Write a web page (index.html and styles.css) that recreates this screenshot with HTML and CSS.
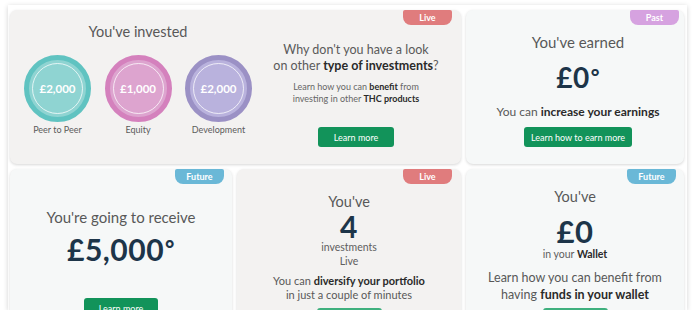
FILE: index.html
```html
<!DOCTYPE html>
<html>
<head>
<meta charset="utf-8">
<link rel="stylesheet" href="styles.css">
</head>
<body>
<div class="board">
  <div class="grid">
    <section class="card card-warm card-wide">
      <span class="badge badge-live">Live</span>
      <div class="invested">
        <h2 class="title">You've invested</h2>
        <div class="coins">
          <div class="coin-item">
            <div class="coin coin-teal"><span>£2,000</span></div>
            <div class="coin-label">Peer to Peer</div>
          </div>
          <div class="coin-item">
            <div class="coin coin-pink"><span>£1,000</span></div>
            <div class="coin-label">Equity</div>
          </div>
          <div class="coin-item">
            <div class="coin coin-purple"><span>£2,000</span></div>
            <div class="coin-label">Development</div>
          </div>
        </div>
      </div>
      <div class="promo">
        <p class="promo-lead">Why don't you have a look<br>on other <b>type of investments</b>?</p>
        <p class="promo-small">Learn how you can <b>benefit</b> from<br>investing in other <b>THC products</b></p>
        <a class="btn btn-promo">Learn more</a>
      </div>
    </section>

    <section class="card card-cool card-earned">
      <span class="badge badge-past">Past</span>
      <h2 class="title title-earned">You've earned</h2>
      <div class="amount amount-earned">£0<span class="mark">°</span></div>
      <p class="note note-earned">You can <b>increase your earnings</b></p>
      <a class="btn btn-earn">Learn how to earn more</a>
    </section>

    <section class="card card-cool card-receive">
      <span class="badge badge-future">Future</span>
      <h2 class="title title-receive">You're going to receive</h2>
      <div class="amount amount-receive">£5,000<span class="mark">°</span></div>
      <a class="btn btn-receive">Learn more</a>
    </section>

    <section class="card card-warm card-count">
      <span class="badge badge-live">Live</span>
      <h2 class="title title-count">You've</h2>
      <div class="amount amount-count">4</div>
      <p class="sub">investments<br>Live</p>
      <p class="note note-count">You can <b>diversify your portfolio</b><br>in just a couple of minutes</p>
      <a class="btn btn-bar" aria-hidden="true"></a>
    </section>

    <section class="card card-cool card-wallet">
      <span class="badge badge-future">Future</span>
      <h2 class="title title-wallet">You've</h2>
      <div class="amount amount-wallet">£0</div>
      <p class="sub sub-wallet">in your <b>Wallet</b></p>
      <p class="note note-wallet">Learn how you can benefit from<br>having <b>funds in your wallet</b></p>
      <a class="btn btn-bar" aria-hidden="true"></a>
    </section>
  </div>
</div>
</body>
</html>
```

FILE: styles.css
```css
* { box-sizing: border-box; }
html, body { margin: 0; padding: 0; background: #ffffff; }
body { font-family: Lato, "Liberation Sans", sans-serif; color: #5a5a5a; }

.board {
  margin: 5px 8px 0 8px;
  height: 305px;
  overflow: hidden;
  background: #ffffff;
  box-shadow: 0 1px 5px rgba(0, 0, 0, 0.18);
  padding: 5px 2px 0 2px;
}

.grid {
  display: grid;
  grid-template-columns: 222px 224px 218px;
  grid-template-rows: 154px 150px;
  column-gap: 5px;
  row-gap: 5px;
}

.card {
  position: relative;
  border-radius: 7px;
  box-shadow: 0 1px 3px rgba(0, 0, 0, 0.16);
  text-align: center;
  display: flex;
  flex-direction: column;
  align-items: center;
}
.card-warm { background: #f3f2f1; }
.card-cool { background: #f6f8f8; }
.card-wide { grid-column: 1 / 3; flex-direction: row; align-items: flex-start; }

.badge {
  position: absolute;
  top: 0;
  right: 9px;
  width: 49px;
  height: 15px;
  border-radius: 2px 2px 8px 8px;
  color: #ffffff;
  font-size: 9px;
  font-weight: 700;
  line-height: 15px;
  text-align: center;
}
.badge-live { background: #e07c7d; }
.badge-past { background: #d6a2e0; right: 5px; }
.badge-future { background: #6ab8d7; right: 8px; }

.title {
  margin: 0;
  font-size: 14.5px;
  font-weight: 400;
  line-height: 18px;
  color: #585858;
}

/* invested */
.invested { width: 256px; padding-top: 13px; display: flex; flex-direction: column; align-items: center; }
.coins { display: flex; gap: 13.5px; margin-top: 14px; }
.coin-item { width: 67px; display: flex; flex-direction: column; align-items: center; }
.coin {
  position: relative;
  width: 67px;
  height: 67px;
  border-radius: 50%;
  border: 5px solid;
  display: flex;
  align-items: center;
  justify-content: center;
  color: #ffffff;
  font-weight: 700;
  font-size: 11.5px;
}
.coin::after {
  content: "";
  position: absolute;
  inset: 3px;
  border-radius: 50%;
  border: 1px solid rgba(255, 255, 255, 0.75);
}
.coin-teal { background: #8fd4d2; border-color: #60c3c1; }
.coin-pink { background: #dda4cf; border-color: #d481bd; }
.coin-purple { background: #b9b2dd; border-color: #9b91c5; }
.coin-label { margin-top: 2px; font-size: 9px; line-height: 12px; color: #5c5c5c; white-space: nowrap; }

/* promo */
.promo { width: 195px; padding: 32px 15px 0 0; display: flex; flex-direction: column; align-items: center; }
.promo-lead { margin: 0; font-size: 12.5px; line-height: 16px; color: #5a5a5a; }
.promo-lead b, .note b, .sub b, .promo-small b { color: #2a2a2a; font-weight: 700; }
.promo-small { margin: 7px 0 0; font-size: 9px; line-height: 12px; color: #666; }

.btn {
  display: flex;
  align-items: center;
  justify-content: center;
  height: 20px;
  border-radius: 3px;
  background: #12935a;
  color: #ffffff;
  font-size: 9px;
  text-decoration: none;
  flex-shrink: 0;
}
.btn-promo { width: 76px; margin-top: 22px; }
.btn-bar { width: 65px; background: #3fb07e; }

/* amounts */
.amount { color: #1d3549; font-weight: 700; letter-spacing: 0.5px; }
.mark { font-size: 0.75em; font-weight: 900; line-height: 0; vertical-align: 0.18em; margin-left: 1px; }

/* earned */
.card-earned { padding: 23px 0 0 6px; }
.title-earned { font-size: 15px; }
.amount-earned { margin-top: 10px; font-size: 28px; line-height: 32px; }
.note { margin: 0; color: #585858; }
.note-earned { margin-top: 11px; font-size: 12px; line-height: 15px; }
.btn-earn { width: 108px; margin-top: 8px; }

/* receive */
.card-receive { padding-top: 39px; }
.title-receive { font-size: 15px; }
.amount-receive { margin-top: 6px; font-size: 30px; line-height: 34px; }
.btn-receive { width: 74px; margin-top: 32px; }

/* count */
.card-count { padding-top: 24px; }
.amount-count { font-size: 30px; line-height: 28px; margin-top: 1px; }
.sub { margin: 0; font-size: 10.5px; line-height: 14px; color: #5e5e5e; }
.note-count { margin-top: 6px; font-size: 11px; line-height: 14px; }
.card-count .btn-bar { margin-top: 6px; }

/* wallet */
.card-wallet { padding-top: 19px; }
.amount-wallet { margin-top: 10px; font-size: 31px; line-height: 30px; }
.sub-wallet { margin-top: 2px; line-height: 13px; }
.note-wallet { margin-top: 8px; font-size: 12.5px; line-height: 17px; }
.card-wallet .btn-bar { margin-top: 5px; }
```
